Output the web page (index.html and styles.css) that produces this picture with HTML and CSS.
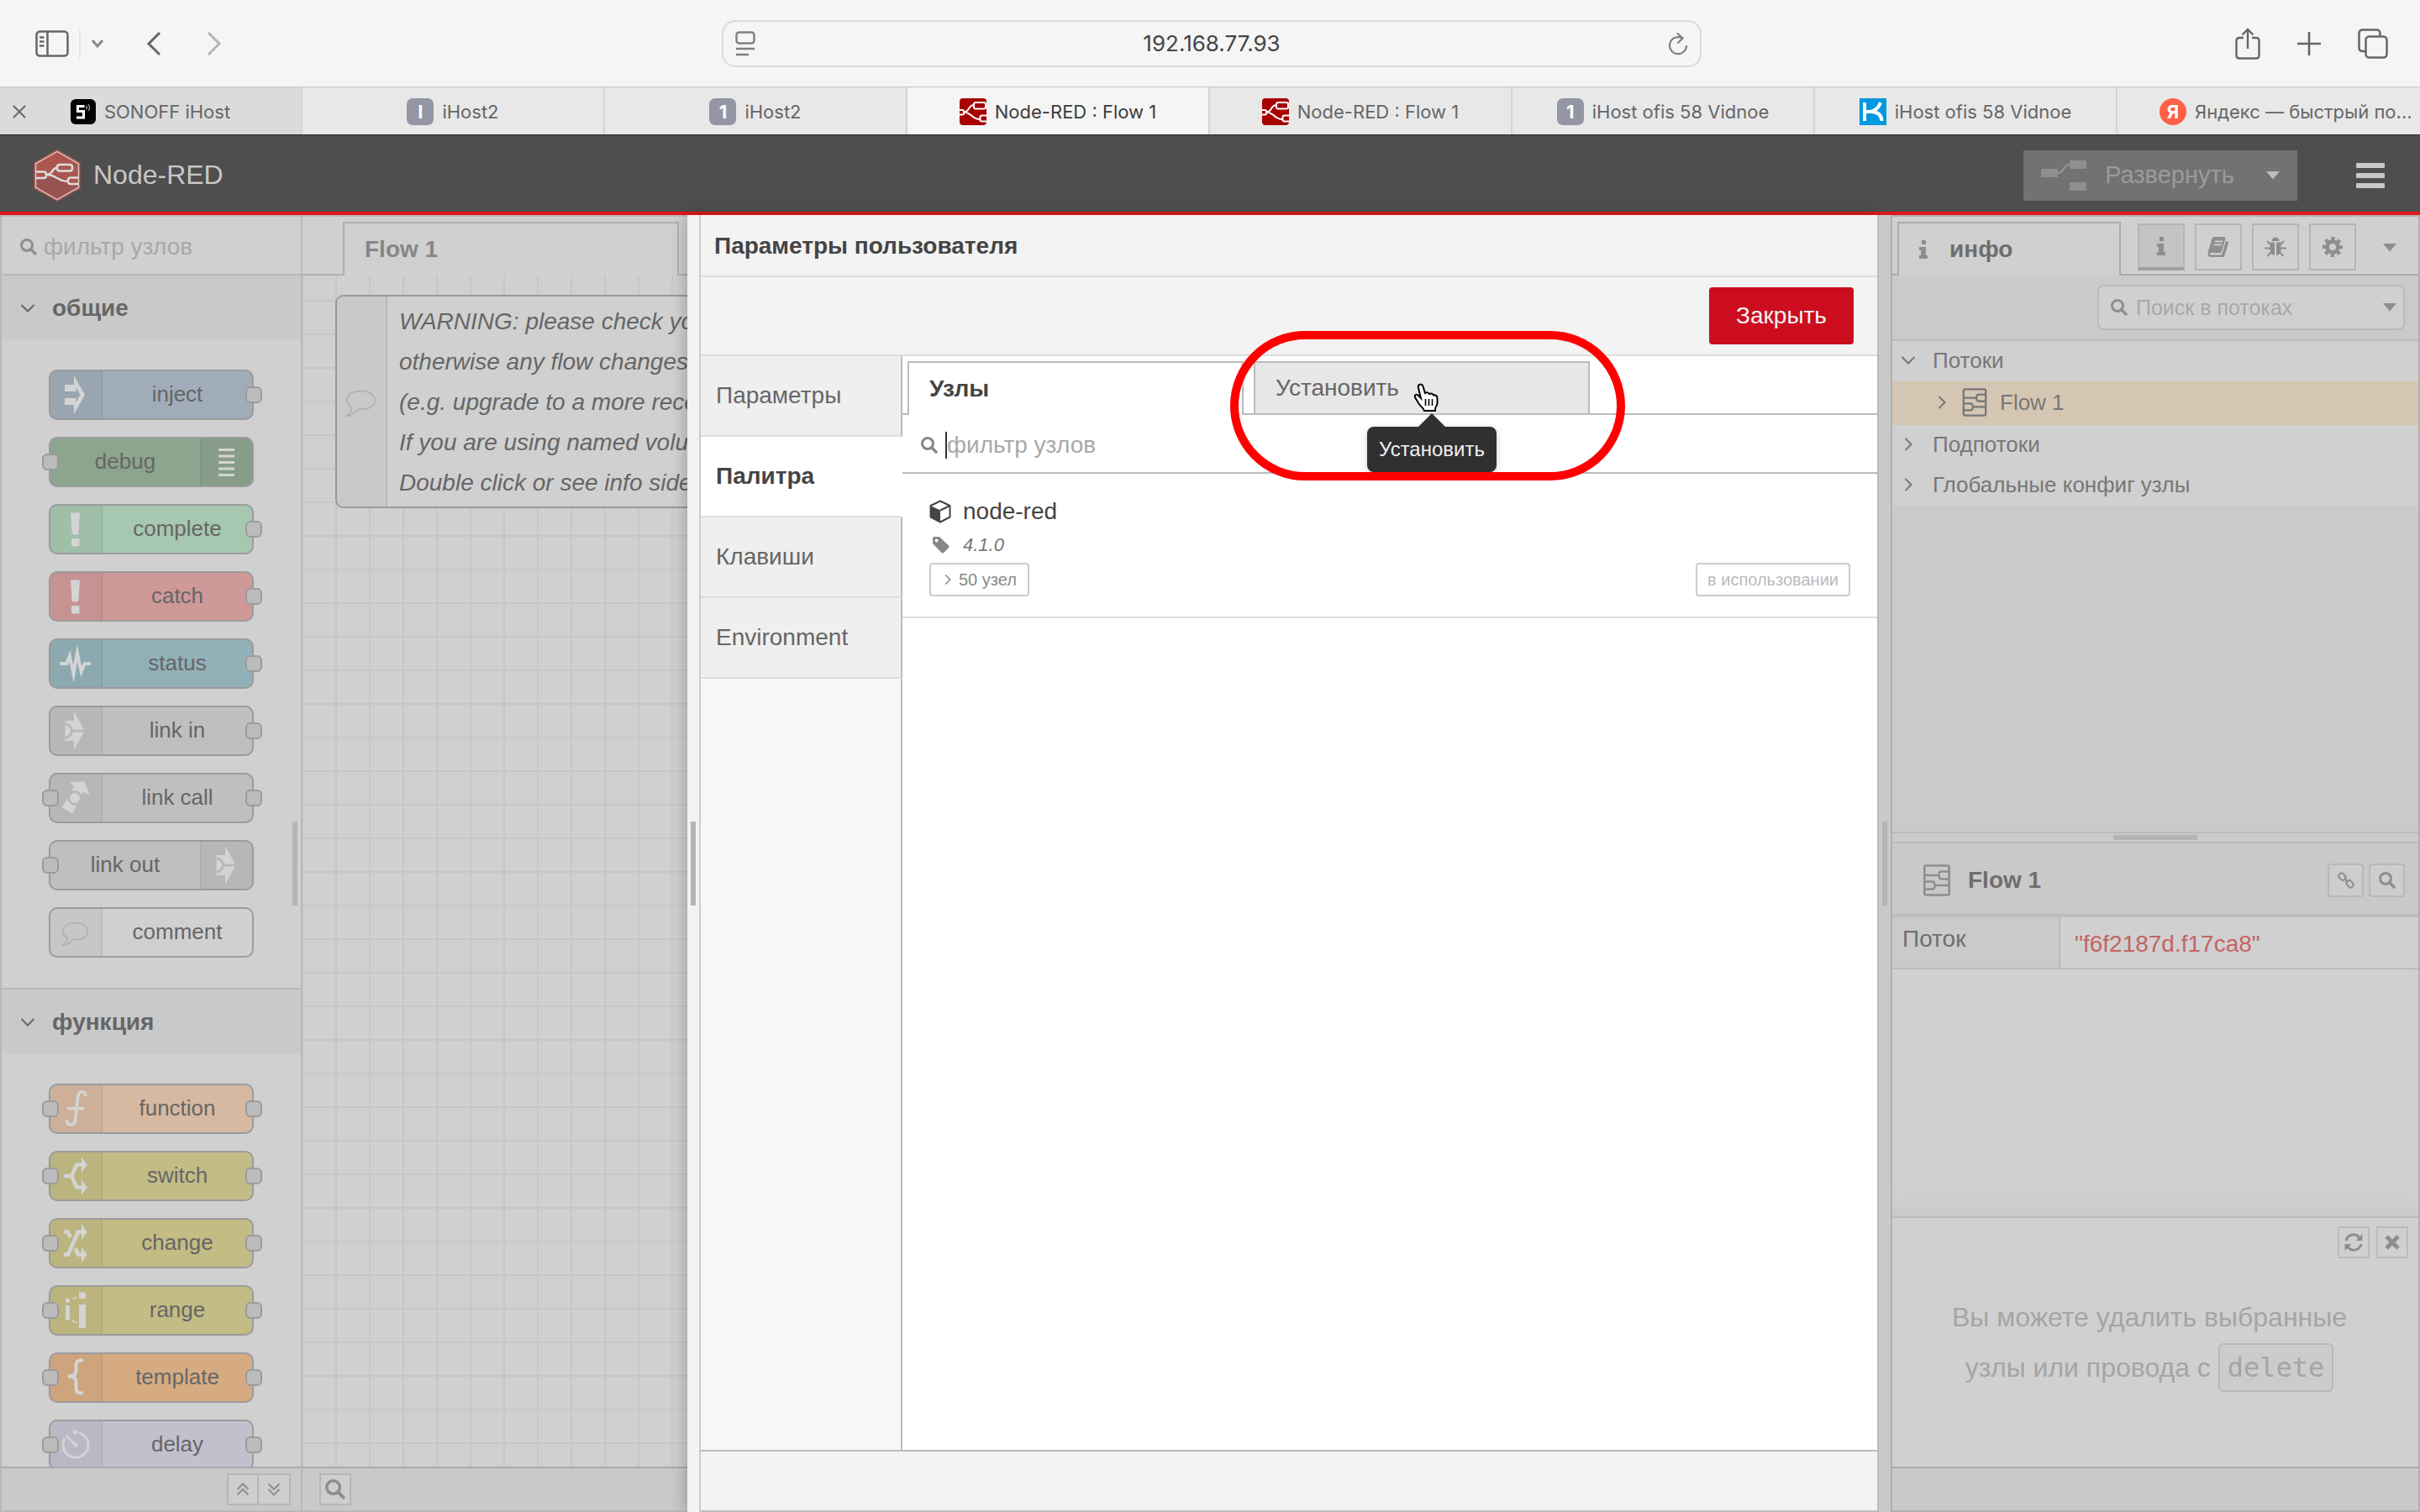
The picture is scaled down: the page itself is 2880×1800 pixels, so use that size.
FILE: index.html
```html
<!DOCTYPE html>
<html lang="ru">

<head>
    <meta charset="UTF-8">
    <meta name="viewport" content="width=device-width, initial-scale=1.0">
    <title>Node-RED : Flow 1</title>
    <link rel="stylesheet" href="styles.css">
</head>

<body>
    <!-- shared icons -->
    <svg class="sprite" aria-hidden="true">
        <symbol id="i-search" viewBox="0 0 20 20">
            <circle cx="8" cy="8" r="6.5" fill="none" stroke="currentColor" stroke-width="3" />
            <path d="M12.5 12.5L18 18" stroke="currentColor" stroke-width="3.4" stroke-linecap="round" />
        </symbol>
        <symbol id="i-down" viewBox="0 0 18 18">
            <path d="M1.5 5L9 12.500L16.500 5" fill="none" stroke="currentColor" stroke-width="2" />
        </symbol>
        <symbol id="i-right" viewBox="0 0 18 18">
            <path d="M5.500 2L12.500 9L5.500 16" fill="none" stroke="currentColor" stroke-width="2" />
        </symbol>
        <symbol id="i-caret" viewBox="0 0 16 10">
            <path d="M0 0H16L8 9.500Z" fill="currentColor" />
        </symbol>
        <symbol id="i-flow" viewBox="0 0 32 38">
            <g fill="none" stroke="currentColor">
                <rect x="1.300" y="1.500" width="29.400" height="35" rx="2" stroke-width="2.600" />
                <path d="M1 13H18M31 8.500H22Q18.500 8.500 18.500 12V14Q18.500 17.500 22 17.500H31M31 25H14M1 20.500H10Q13.500 20.500 13.500 24V26Q13.500 29.500 10 29.500H1" stroke-width="2.400" />
            </g>
        </symbol>
        <symbol id="i-info" viewBox="0 0 10 22">
            <path d="M3 0H8V5H3ZM0 8H8V18H10V22H0V18H2V12H0Z" fill="currentColor" />
        </symbol>
        <symbol id="i-red" viewBox="0 0 32 32">
            <rect width="32" height="32" rx="4" fill="#a60000" />
            <path d="M0 14H3.500Q5 14 5 15.500V18Q5 19.500 3.500 19.500H0M5 16.500C12 16.500 10 8 17 8M5 16.500C15 17 14 25 24 25M32 20.500H26.500Q24.500 20.500 24.500 22.500V25.500Q24.500 27.500 26.500 27.500H32M31 7Q31 5 29 5H19Q17 5 17 7V10.500Q17 12.500 19 12.500H29Q31 12.500 31 10.500Z" fill="none" stroke="#fff" stroke-width="2" />
        </symbol>
        <symbol id="n-inject" viewBox="0 0 60 56">
            <path d="M17 16H28V5L41 28L28 51V40H17V32H30.500V37L35.500 28L30.500 19V24H17Z" fill="currentColor" />
        </symbol>
        <symbol id="n-debug" viewBox="0 0 60 56">
            <path d="M20 12H39V15H20ZM20 19.500H39V22.500H20ZM20 27H39V30H20ZM20 34.500H39V37.500H20ZM20 42H39V45H20Z" fill="currentColor" />
        </symbol>
        <symbol id="n-alert" viewBox="0 0 60 56">
            <path d="M24 8.500H35L33.500 32Q33.500 34.500 31 34.500H28Q25.500 34.500 25.500 32Z" fill="currentColor" />
            <rect x="25" y="39" width="9.500" height="9.500" rx="1.500" fill="currentColor" />
        </symbol>
        <symbol id="n-status" viewBox="0 0 60 56">
            <path d="M11 26H18L23.700 11.700L27 30L32 4.700L37 31L40 26H48V30H42L36.300 44.300L32 26L27.700 51.300L22.700 26.500L21 30H11Z" fill="currentColor" />
        </symbol>
        <symbol id="n-link" viewBox="0 0 60 56">
            <path d="M17.500 16H28V5L40.500 28L28 51V40H17.500Z" fill="currentColor" />
            <path d="M17.500 20A8 8 0 0 1 17.500 36M25 28H41" fill="none" stroke="#b8b8b8" stroke-width="3" />
        </symbol>
        <symbol id="n-call" viewBox="0 0 60 56">
            <path d="M13.500 39.500L28 14.500L23 9.500L40 8L46.500 24L39 20.500L26.500 46.500Z" fill="currentColor" />
            <circle cx="29" cy="28" r="7.500" fill="currentColor" stroke="#b8b8b8" stroke-width="3" />
        </symbol>
        <symbol id="n-comment" viewBox="0 0 60 56">
            <path d="M20 34.500C10 28 14 17 29.500 16.500C40 16.500 44.500 22 44.500 27C44.500 33 38 37 27 36.500C23 40 19 44 14 43.500C18 41 20.500 37 20 34.500Z" fill="none" stroke="#b0b0b0" stroke-width="1.500" />
        </symbol>
        <symbol id="n-function" viewBox="0 0 60 56">
            <path d="M19 41Q20 47.500 25 47Q29.500 46 30 39L32.500 15Q33 8 37.500 7.500Q41 7.500 42 13M20 27.500H40" fill="none" stroke="currentColor" stroke-width="3.600" />
        </symbol>
        <symbol id="n-switch" viewBox="0 0 60 56">
            <path d="M16 28H25L31.500 14.500H38M25 28L31.500 41.500H38" fill="none" stroke="currentColor" stroke-width="4.600" />
            <path d="M37 5L43.500 14.500L37 24ZM37 32.500L43.500 41.500L37 51Z" fill="currentColor" />
        </symbol>
        <symbol id="n-change" viewBox="0 0 60 56">
            <path d="M16 41.500H21L33 14.500H38M16 14.500H20.500L24 21M29.500 34L33 41.500H38" fill="none" stroke="currentColor" stroke-width="4.600" />
            <path d="M37 5L43.500 14.500L37 24ZM37 32.500L43.500 41.500L37 51Z" fill="currentColor" />
        </symbol>
        <symbol id="n-range" viewBox="0 0 60 56">
            <path d="M18 14H23V18.500H18ZM18 22H23V39H18ZM34 6.500H42V14H34ZM34 21H42V49H34Z" fill="currentColor" />
            <path d="M26 14.500L31.500 12M25 39.500L32 43" stroke="currentColor" stroke-width="1.500" />
        </symbol>
        <symbol id="n-template" viewBox="0 0 60 56">
            <path d="M39 7.500H36Q30.500 7.500 30.500 13V20Q30.500 26.500 21 26.500Q30.500 26.500 30.500 33V41Q30.500 46.500 36 46.500H39" fill="none" stroke="currentColor" stroke-width="4" />
        </symbol>
        <symbol id="n-delay" viewBox="0 0 60 56">
            <path d="M34 13.500A15 15 0 1 1 17 20.500" fill="none" stroke="currentColor" stroke-width="3" />
            <path d="M18.500 17L30 28" stroke="currentColor" stroke-width="2.600" />
            <circle cx="29.500" cy="13" r="2.800" fill="currentColor" />
            <circle cx="30" cy="28" r="2.800" fill="currentColor" />
        </symbol>
    </svg>

    <!-- browser toolbar -->
    <div class="browser-bar">
        <div class="browser-side">
            <button class="tool" aria-label="Sidebar">
                <svg width="40" height="32" viewBox="0 0 40 32" fill="none" stroke="currentColor" stroke-width="2.500">
                    <rect x="1.500" y="1.500" width="37" height="29" rx="4" />
                    <path d="M14.500 2V30M5 8.500H10.500M5 13.500H10.500M5 18.500H10.500" />
                </svg>
            </button>
            <span class="tool-divider"></span>
            <button class="tool tool-small" aria-label="Menu">
                <svg width="16" height="12" viewBox="0 0 16 12" fill="none" stroke="#888" stroke-width="3"><path d="M2 2L8 9L14 2" /></svg>
            </button>
            <button class="tool tool-back" aria-label="Back">
                <svg width="18" height="30" viewBox="0 0 18 30" fill="none" stroke="currentColor" stroke-width="3"><path d="M16 2L3 15L16 28" /></svg>
            </button>
            <button class="tool tool-forward" aria-label="Forward">
                <svg width="18" height="30" viewBox="0 0 18 30" fill="none" stroke="#b4b4b4" stroke-width="3"><path d="M2 2L15 15L2 28" /></svg>
            </button>
        </div>
        <div class="address">
            <svg width="24" height="30" viewBox="0 0 24 30" fill="none" stroke="#808080" stroke-width="2.400">
                <rect x="1.500" y="1.500" width="21" height="13" rx="3" />
                <path d="M1 21H23M1 28H16" />
            </svg>
            <input type="text" class="address-input" aria-label="Address" value="192.168.77.93">
            <svg width="24" height="28" viewBox="0 0 24 28" fill="none" stroke="#808080" stroke-width="2.200">
                <path d="M17 7.500A10 10 0 1 0 22 16M11 1.500L17.500 7.500L11.500 13.500" />
            </svg>
        </div>
        <div class="browser-side browser-side-right">
            <button class="tool" aria-label="Share">
                <svg width="30" height="38" viewBox="0 0 30 38" fill="none" stroke="currentColor" stroke-width="2.400">
                    <path d="M10 12H5Q1.500 12 1.500 15.500V33Q1.500 36.500 5 36.500H25Q28.500 36.500 28.500 33V15.500Q28.500 12 25 12H20M15 25V2M8.500 8.500L15 2L21.500 8.500" />
                </svg>
            </button>
            <button class="tool" aria-label="New tab">
                <svg width="28" height="28" viewBox="0 0 28 28" stroke="currentColor" stroke-width="2.600"><path d="M14 0V28M0 14H28" /></svg>
            </button>
            <button class="tool" aria-label="Tabs">
                <svg width="36" height="36" viewBox="0 0 36 36" fill="none" stroke="currentColor" stroke-width="2.500">
                    <rect x="9.500" y="9.500" width="25" height="25" rx="4" />
                    <path d="M9 27H6Q1.500 27 1.500 23V6Q1.500 1.500 6 1.500H22Q26.500 1.500 26.500 6V9" />
                </svg>
            </button>
        </div>
    </div>

    <nav class="browser-tabs">
        <a href="#" class="browser-tab browser-tab-hover">
            <svg class="tab-close" width="16" height="16" viewBox="0 0 16 16" stroke="#666" stroke-width="2"><path d="M1 1L15 15M15 1L1 15" /></svg>
            <svg width="30" height="30" viewBox="0 0 30 30" fill="none">
                <rect width="30" height="30" rx="6" fill="#000" />
                <path d="M16.500 8.500H8.500V14.500H15.500V22H7" stroke="#fff" stroke-width="3" />
                <path d="M18.500 8Q20.500 10 18.500 12.500M21 6Q24 10 21 14" stroke="#aaa" stroke-width="1.200" />
            </svg>
            <span>SONOFF iHost</span>
        </a>
        <a href="#" class="browser-tab"><span class="letter">I</span><span>iHost2</span></a>
        <a href="#" class="browser-tab"><span class="letter">1</span><span>iHost2</span></a>
        <a href="#" class="browser-tab browser-tab-active"><svg width="32" height="32"><use href="#i-red" /></svg><span>Node-RED : Flow 1</span></a>
        <a href="#" class="browser-tab"><svg width="32" height="32"><use href="#i-red" /></svg><span>Node-RED : Flow 1</span></a>
        <a href="#" class="browser-tab"><span class="letter">1</span><span>iHost ofis 58 Vidnoe</span></a>
        <a href="#" class="browser-tab">
            <svg width="32" height="32" viewBox="0 0 32 32" fill="none">
                <rect width="32" height="32" fill="#0099e0" />
                <path d="M6 5V27M25 5Q22 14 13 16M6 16H15Q26 17 26.500 27" stroke="#fff" stroke-width="4" />
            </svg>
            <span>iHost ofis 58 Vidnoe</span>
        </a>
        <a href="#" class="browser-tab browser-tab-last"><span class="letter letter-round">Я</span><span>Яндекс — быстрый по...</span></a>
    </nav>

    <header class="header">
        <svg width="56" height="62" viewBox="0 0 56 62" fill="none">
            <path d="M28 0L55.500 15.500V46.500L28 62L.5 46.500V15.500Z" fill="#ab574f" />
            <path d="M28 31L53 42V46L28 60L3 46V36Z" fill="#985350" />
            <path d="M28 2.500L53.500 17V45L28 59.500L2.500 45V17Z" stroke="#dcc5c3" stroke-width="1.400" />
            <path d="M3 26.500H12Q15 26.500 15 29.500V31Q15 34 12 34H3M15 30C24 30 21 22 28 21.500M15 30C26 29 28 38 41 38M53 33.500H44Q41 33.500 41 36.500V38Q41 41 44 41H53M46 21Q46 18 43 18H31Q28 18 28 21V22.500Q28 25.500 31 25.500H43Q46 25.500 46 22.500Z" stroke="#ddd" stroke-width="2.400" />
        </svg>
        <span class="brand">Node-RED</span>
        <button class="deploy" disabled>
            <svg width="54" height="36" viewBox="0 0 54 36" fill="#8f8f8f">
                <rect y="10" width="20" height="10" /><rect x="34" width="20" height="10" /><rect x="34" y="26" width="20" height="10" />
                <path d="M20 15C28 15 26 5 34 5" fill="none" stroke="#8f8f8f" stroke-width="2.500" />
            </svg>
            <span>Развернуть</span>
            <svg class="deploy-caret" width="16" height="10"><use href="#i-caret" /></svg>
        </button>
        <button class="menu" aria-label="Menu"><span></span><span></span><span></span></button>
    </header>

    <main class="editor">
        <aside class="palette">
            <label class="palette-search">
                <svg width="20" height="20"><use href="#i-search" /></svg>
                <input type="text" class="input" placeholder="фильтр узлов" aria-label="фильтр узлов">
            </label>
            <div class="palette-list">
                <h3 class="category"><svg width="18" height="18"><use href="#i-down" /></svg>общие</h3>
                <div class="nodes">
                    <div class="node inject"><svg class="node-icon"><use href="#n-inject" /></svg><span class="node-label">inject</span><i class="port port-out"></i></div>
                    <div class="node node-right debug"><svg class="node-icon"><use href="#n-debug" /></svg><span class="node-label">debug</span><i class="port port-in"></i></div>
                    <div class="node complete"><svg class="node-icon"><use href="#n-alert" /></svg><span class="node-label">complete</span><i class="port port-out"></i></div>
                    <div class="node catch"><svg class="node-icon"><use href="#n-alert" /></svg><span class="node-label">catch</span><i class="port port-out"></i></div>
                    <div class="node status"><svg class="node-icon"><use href="#n-status" /></svg><span class="node-label">status</span><i class="port port-out"></i></div>
                    <div class="node link"><svg class="node-icon"><use href="#n-link" /></svg><span class="node-label">link in</span><i class="port port-out"></i></div>
                    <div class="node link"><svg class="node-icon"><use href="#n-call" /></svg><span class="node-label">link call</span><i class="port port-in"></i><i class="port port-out"></i></div>
                    <div class="node node-right link"><svg class="node-icon"><use href="#n-link" /></svg><span class="node-label">link out</span><i class="port port-in"></i></div>
                    <div class="node comment"><svg class="node-icon"><use href="#n-comment" /></svg><span class="node-label">comment</span></div>
                </div>
                <h3 class="category"><svg width="18" height="18"><use href="#i-down" /></svg>функция</h3>
                <div class="nodes">
                    <div class="node function"><svg class="node-icon"><use href="#n-function" /></svg><span class="node-label">function</span><i class="port port-in"></i><i class="port port-out"></i></div>
                    <div class="node switch"><svg class="node-icon"><use href="#n-switch" /></svg><span class="node-label">switch</span><i class="port port-in"></i><i class="port port-out"></i></div>
                    <div class="node switch"><svg class="node-icon"><use href="#n-change" /></svg><span class="node-label">change</span><i class="port port-in"></i><i class="port port-out"></i></div>
                    <div class="node switch"><svg class="node-icon"><use href="#n-range" /></svg><span class="node-label">range</span><i class="port port-in"></i><i class="port port-out"></i></div>
                    <div class="node template"><svg class="node-icon"><use href="#n-template" /></svg><span class="node-label">template</span><i class="port port-in"></i><i class="port port-out"></i></div>
                    <div class="node delay"><svg class="node-icon"><use href="#n-delay" /></svg><span class="node-label">delay</span><i class="port port-in"></i><i class="port port-out"></i></div>
                </div>
            </div>
            <span class="grip palette-grip"></span>
            <div class="footer palette-footer">
                <button class="footer-button" aria-label="Collapse all">
                    <svg width="16" height="16" viewBox="0 0 16 16" fill="none" stroke="currentColor" stroke-width="2"><path d="M1.500 8L8 1.500L14.500 8M1.500 14.500L8 8L14.500 14.500" /></svg>
                </button>
                <button class="footer-button" aria-label="Expand all">
                    <svg width="16" height="16" viewBox="0 0 16 16" fill="none" stroke="currentColor" stroke-width="2"><path d="M1.500 1.500L8 8L14.500 1.500M1.500 8L8 14.500L14.500 8" /></svg>
                </button>
            </div>
        </aside>

        <section class="workspace">
            <div class="tabs"><a href="#" class="tab flow-tab">Flow 1</a></div>
            <div class="canvas">
                <div class="note">
                    <div class="note-icon"><svg width="66" height="62"><use href="#n-comment" /></svg></div>
                    <div class="note-text">WARNING: please check you<br>otherwise any flow changes<br>(e.g. upgrade to a more recent<br>If you are using named volume<br>Double click or see info side</div>
                </div>
            </div>
            <div class="footer workspace-footer">
                <button class="footer-button" aria-label="Search"><svg width="24" height="24"><use href="#i-search" /></svg></button>
            </div>
        </section>

        <section class="tray">
            <div class="tray-handle"><span class="grip"></span></div>
            <div class="tray-content">
                <h2 class="tray-title">Параметры пользователя</h2>
                <div class="tray-toolbar"><button class="close-button">Закрыть</button></div>
                <div class="tray-body">
                    <nav class="side-tabs">
                        <a href="#" class="side-tab">Параметры</a>
                        <a href="#" class="side-tab side-tab-active">Палитра</a>
                        <a href="#" class="side-tab">Клавиши</a>
                        <a href="#" class="side-tab">Environment</a>
                        <span class="side-rest"></span>
                    </nav>
                    <div class="manager">
                        <div class="tabs manager-tabs">
                            <a href="#" class="tab manager-tab">Узлы</a>
                            <div class="tab-wrap">
                                <a href="#" class="tab manager-tab manager-tab-hover">Установить</a>
                                <span class="tooltip">Установить</span>
                                <span class="ring"></span>
                                <svg class="pointer" viewBox="0 0 32 36">
                                    <path d="M7 3C9 2 11 3 11.500 5L14 13C16 12 18 12 19 14C21 13 23 13.500 24 15.500C26 15 28.500 16 28.500 19V25C28.500 28 26 29 26 32V34H13C12 30 7 28 5 23L2 18C1 15 4 13.500 6 16L9 19L6 7C5.500 5 6 3.500 7 3Z" fill="#fff" stroke="#000" stroke-width="2" />
                                    <path d="M14.500 20V28M18.500 20V28M22.500 20V28" stroke="#000" stroke-width="1.600" />
                                </svg>
                            </div>
                        </div>
                        <label class="manager-search">
                            <svg width="20" height="20"><use href="#i-search" /></svg>
                            <span class="text-cursor"></span>
                            <input type="text" class="input" placeholder="фильтр узлов" aria-label="фильтр узлов">
                        </label>
                        <div class="module">
                            <div class="module-name">
                                <svg width="26" height="28" viewBox="0 0 26 28">
                                    <path d="M13 1.500L24.500 7V20.500L13 26.500L1.500 20.500V7Z" fill="#fff" stroke="#444" stroke-width="2" stroke-linejoin="round" />
                                    <path d="M1.500 7L13 12.500V26.500L1.500 20.500Z" fill="#444" />
                                    <path d="M13 12.500L24.500 7" stroke="#444" stroke-width="2" />
                                </svg>
                                <span>node-red</span>
                            </div>
                            <div class="module-version">
                                <svg width="20" height="20" viewBox="0 0 20 20"><path d="M0 2Q0 0 2 0H8L19 10.500Q20 12 19 13L13 19Q12 20 10.500 19L0 8ZM4.500 2.500A2 2 0 1 0 4.600 6.500A2 2 0 1 0 4.500 2.500Z" fill="#888" fill-rule="evenodd" /></svg>
                                <em>4.1.0</em>
                            </div>
                            <div class="module-actions">
                                <button class="small-button"><svg width="14" height="14"><use href="#i-right" /></svg>50 узел</button>
                                <button class="small-button" disabled>в использовании</button>
                            </div>
                        </div>
                    </div>
                </div>
                <div class="tray-footer"></div>
            </div>
        </section>

        <div class="separator"><span class="grip"></span></div>

        <aside class="sidebar">
            <div class="tabs sidebar-tabs">
                <a href="#" class="tab info-tab"><svg width="10" height="22"><use href="#i-info" /></svg>инфо</a>
                <div class="tab-buttons">
                    <button class="tab-button tab-button-active" aria-label="Info"><svg width="10" height="22"><use href="#i-info" /></svg></button>
                    <button class="tab-button" aria-label="Help">
                        <svg width="26" height="24" viewBox="0 0 26 24"><path d="M8 0H20Q22 0 21.500 2L17 17Q16.500 19 14.500 19H4Q2.500 19 2.500 20.500Q3 21.500 4 21.500H17L22 5Q25.500 5 25 7L20.500 22Q20 24 18 24H4Q0 23.500 .5 19L5.500 2Q6 0 8 0ZM9 4.500L8.600 6.300H18L18.400 4.500ZM8 8.500L7.600 10.300H17L17.400 8.500Z" fill="currentColor" fill-rule="evenodd" /></svg>
                    </button>
                    <button class="tab-button" aria-label="Debug">
                        <svg width="26" height="24" viewBox="0 0 26 24" stroke="currentColor" fill="none" stroke-width="2">
                            <path d="M8.500 5Q9 .5 13 .5Q17 .5 17.500 5Z" fill="currentColor" stroke="none" />
                            <path d="M6.500 6.500H12V22Q6.500 21 6.500 15ZM14 6.500H19.500V15Q19.500 21 14 22Z" fill="currentColor" stroke="none" />
                            <path d="M7 9L3 5M19 9L23 5M7 13.500H0M19 13.500H26M8 18L3.500 23M18 18L22.500 23" />
                        </svg>
                    </button>
                    <button class="tab-button" aria-label="Config">
                        <svg width="24" height="24" viewBox="0 0 24 24" fill="none" stroke="currentColor">
                            <circle cx="12" cy="12" r="6.500" stroke-width="5" />
                            <circle cx="12" cy="12" r="10" stroke-width="4" stroke-dasharray="4.200 3.654" stroke-dashoffset="2.100" />
                        </svg>
                    </button>
                </div>
                <button class="plain-button" aria-label="More"><svg width="16" height="10"><use href="#i-caret" /></svg></button>
            </div>
            <div class="outline">
                <div class="flow-search-bar">
                    <label class="flow-search">
                        <svg width="20" height="20"><use href="#i-search" /></svg>
                        <input type="text" class="input" placeholder="Поиск в потоках" aria-label="Поиск в потоках">
                        <svg width="16" height="10"><use href="#i-caret" /></svg>
                    </label>
                </div>
                <ul class="tree">
                    <li class="tree-row"><svg width="18" height="18"><use href="#i-down" /></svg>Потоки</li>
                    <li class="tree-row tree-selected"><svg width="18" height="18"><use href="#i-right" /></svg><svg width="30" height="34"><use href="#i-flow" /></svg>Flow 1</li>
                    <li class="tree-row"><svg width="18" height="18"><use href="#i-right" /></svg>Подпотоки</li>
                    <li class="tree-row"><svg width="18" height="18"><use href="#i-right" /></svg>Глобальные конфиг узлы</li>
                </ul>
            </div>
            <div class="splitter"><span></span></div>
            <div class="details">
                <div class="details-title">
                    <svg width="34" height="38"><use href="#i-flow" /></svg>
                    <h3>Flow 1</h3>
                    <button class="details-button" aria-label="Link">
                        <svg width="20" height="20" viewBox="0 0 20 20" fill="none" stroke="currentColor" stroke-width="2">
                            <rect x="1" y="2.500" width="9" height="6.500" rx="3" transform="rotate(45 5.500 5.700)" />
                            <rect x="10" y="11" width="9" height="6.500" rx="3" transform="rotate(45 14.500 14.200)" />
                            <path d="M7.500 7.500L12.500 12.500" />
                        </svg>
                    </button>
                    <button class="details-button" aria-label="Find"><svg width="20" height="20"><use href="#i-search" /></svg></button>
                </div>
                <table class="props">
                    <tr>
                        <th>Поток</th>
                        <td>"f6f2187d.f17ca8"</td>
                    </tr>
                </table>
            </div>
            <div class="tips">
                <div class="tips-buttons">
                    <button class="tips-button" aria-label="Refresh">
                        <svg width="22" height="22" viewBox="0 0 22 22" fill="none" stroke="currentColor" stroke-width="3">
                            <path d="M2 9A9 9 0 0 1 18 5.500M20 13A9 9 0 0 1 4 16.500" />
                            <path d="M21.500 1V9H13.500ZM.5 21V13H8.500Z" fill="currentColor" stroke="none" />
                        </svg>
                    </button>
                    <button class="tips-button" aria-label="Close">
                        <svg width="18" height="18" viewBox="0 0 18 18" stroke="currentColor" stroke-width="5"><path d="M2 2L16 16M16 2L2 16" /></svg>
                    </button>
                </div>
                <p class="tip">Вы можете удалить выбранные<br>узлы или провода с <kbd>delete</kbd></p>
            </div>
            <div class="footer"></div>
        </aside>
    </main>
</body>

</html>
```

FILE: styles.css
```css
* {
    box-sizing: border-box;
}

body {
    margin: 0;
    height: 100vh;
    display: flex;
    flex-direction: column;
    overflow: hidden;
    font-family: "Liberation Sans", Arial, sans-serif;
    font-size: 28px;
    color: #666;
    background-color: #d0d0d0;
}

h2,
h3,
ul,
p {
    margin: 0;
    padding: 0;
}

a {
    color: inherit;
    text-decoration: none;
}

button {
    font: inherit;
    color: inherit;
    background: none;
    border: none;
    padding: 0;
    display: flex;
    align-items: center;
    justify-content: center;
}

svg {
    flex: none;
}

.sprite {
    display: none;
}

.input {
    flex: 1;
    min-width: 0;
    font: inherit;
    color: #666;
    border: none;
    padding: 0;
    background: none;
    outline: none;
}

.input::placeholder {
    color: #a8a8a8;
    opacity: 1;
}

/* browser window */
.browser-bar {
    flex: none;
    height: 104px;
    display: flex;
    align-items: center;
    background-color: #f5f5f5;
    border-bottom: 1px solid #c4c4c4;
}

.browser-side {
    flex: 1;
    display: flex;
    align-items: center;
    padding-left: 42px;
    color: #666;
}

.browser-side-right {
    justify-content: flex-end;
    gap: 44px;
    padding: 0 38px 0 0;
}

.tool-divider {
    width: 2px;
    height: 36px;
    margin: 0 12px;
    background-color: #e6e6e6;
}

.tool-back {
    margin-left: 50px;
}

.tool-forward {
    margin-left: 54px;
}

.address {
    flex: 0 1 1166px;
    height: 56px;
    padding: 0 14px 0 14px;
    display: flex;
    align-items: center;
    border: 2px solid #dadada;
    border-radius: 16px;
}

.address-input {
    flex: 1;
    min-width: 0;
    border: none;
    background: none;
    text-align: center;
    font-family: Inter, sans-serif;
    font-size: 26px;
    color: #444;
}

.browser-tabs {
    flex: none;
    height: 56px;
    display: flex;
    font-family: Inter, sans-serif;
    font-size: 22px;
    background-color: #e8e8e8;
}

.browser-tab {
    width: 12.5%;
    position: relative;
    padding-top: 2px;
    display: flex;
    align-items: center;
    justify-content: center;
    gap: 10px;
    white-space: nowrap;
    overflow: hidden;
    border-right: 2px solid #d4d4d4;
}

.browser-tab-hover {
    background-color: #dbdbdb;
}

.browser-tab-active {
    background-color: #f5f5f5;
    color: #3c3c3c;
}

.browser-tab-last {
    border-right: none;
    padding-left: 50px;
    justify-content: flex-start;
}

.tab-close {
    position: absolute;
    left: 15px;
    top: 21px;
}

.letter {
    width: 32px;
    height: 32px;
    border-radius: 7px;
    background-color: #9496a4;
    color: #fff;
    font-weight: bold;
    text-align: center;
    line-height: 32px;
}

.letter-round {
    border-radius: 50%;
    background-color: #ff6047;
}

/* editor header */
.header {
    flex: none;
    height: 96px;
    padding: 4px 0 0 40px;
    display: flex;
    align-items: center;
    background-color: #4e4e4e;
    border-top: 1px solid #262626;
    border-bottom: 4px solid #e11919;
    font-size: 32px;
}

.brand {
    flex: 1;
    margin-left: 15px;
    color: #c7c7c7;
}

.deploy {
    height: 60px;
    width: 326px;
    gap: 22px;
    background-color: #727272;
    color: #9b9b9b;
    font-size: 29px;
}

.deploy-caret {
    color: #bbb;
    margin-left: 16px;
}

.menu {
    width: 34px;
    margin: 0 42px 0 70px;
    flex-direction: column;
    gap: 6px;
}

.menu span {
    width: 100%;
    height: 6px;
    border-radius: 1px;
    background-color: #c8c8c8;
}

.editor {
    flex: 1;
    min-height: 0;
    display: flex;
}

.footer {
    flex: none;
    height: 52px;
    display: flex;
    align-items: center;
    background-color: #c9c9c9;
    border-top: 2px solid #aaa;
}

.footer-button {
    width: 38px;
    height: 38px;
    border: 2px solid #b6b6b6;
    background-color: #cecece;
    color: #8e8e8e;
}

.grip {
    width: 6px;
    height: 100px;
    background-color: #b5b5b5;
}

/* tab strips */
.tabs {
    flex: none;
    height: 70px;
    padding-top: 6px;
    display: flex;
    border-bottom: 2px solid #aaa;
}

.tab {
    height: 64px;
    padding: 0 24px;
    display: flex;
    align-items: center;
    border: 2px solid #aaa;
    border-bottom: none;
    background-color: #d0d0d0;
    font-weight: bold;
}

/* palette */
.palette {
    flex: none;
    width: 360px;
    position: relative;
    display: flex;
    flex-direction: column;
    border: 2px solid #b8b8b8;
    background-color: #d0d0d0;
}

.palette-search {
    flex: none;
    height: 68px;
    padding: 4px 0 0 22px;
    display: flex;
    align-items: center;
    gap: 8px;
    color: #8e8e8e;
}

.palette-list {
    flex: 1;
    min-height: 0;
    overflow: hidden;
}

.category {
    height: 78px;
    padding: 2px 0 0 22px;
    display: flex;
    align-items: center;
    gap: 20px;
    font-size: 28px;
    border-top: 2px solid #b8b8b8;
    background-color: #c9c9c9;
}

.nodes {
    padding: 36px 56px;
    display: flex;
    flex-direction: column;
    gap: 20px;
}

.node {
    flex: none;
    height: 60px;
    position: relative;
    display: flex;
    border: 2px solid #9b9b9b;
    border-radius: 10px;
    font-size: 26px;
}

.node-right {
    flex-direction: row-reverse;
}

.node-icon {
    width: 62px;
    height: 56px;
    color: #d4d4d4;
    background-color: rgba(0, 0, 0, 0.04);
    border-right: 2px solid rgba(0, 0, 0, 0.05);
    border-radius: 8px 0 0 8px;
}

.node-right .node-icon {
    border-right: none;
    border-left: 2px solid rgba(0, 0, 0, 0.05);
    border-radius: 0 8px 8px 0;
}

.node-label {
    flex: 1;
    text-align: center;
    line-height: 54px;
}

.port {
    position: absolute;
    top: 18px;
    width: 20px;
    height: 20px;
    border: 2px solid #9b9b9b;
    border-radius: 6px;
    background-color: #bcbcbc;
}

.port-in {
    left: -10px;
}

.port-out {
    right: -12px;
}

.inject { background-color: #a0adb9; }
.debug { background-color: #8da48f; }
.complete { background-color: #a6c7b0; }
.catch { background-color: #cf9998; }
.status { background-color: #92b0b8; }
.link { background-color: #bfbfbf; }
.comment { background-color: #d0d0d0; }
.function { background-color: #d7b8a1; }
.switch { background-color: #c3bc85; }
.template { background-color: #d6ab82; }
.delay { background-color: #c3c0ce; }

.palette-grip {
    position: absolute;
    right: 4px;
    top: 50%;
    margin-top: -50px;
}

.palette-footer {
    justify-content: flex-end;
    padding-right: 12px;
}

.palette-footer .footer-button + .footer-button {
    margin-left: -2px;
    width: 40px;
}

/* workspace */
.workspace {
    flex: 1;
    min-width: 0;
    display: flex;
    flex-direction: column;
    overflow: hidden;
    border: solid #b8b8b8;
    border-width: 2px 0;
}

.workspace .tabs {
    padding-left: 48px;
    border-color: #b0b0b0;
}

.flow-tab {
    width: 400px;
    border-color: #b0b0b0;
    color: #868686;
}

/* grid lines every 40px */
.canvas {
    flex: 1;
    position: relative;
    overflow: hidden;
    background-image: linear-gradient(#c6c6c6 2px, transparent 2px), linear-gradient(90deg, #c6c6c6 2px, transparent 2px);
    background-size: 40px 40px;
    background-position: 39px 29px;
}

.note {
    position: absolute;
    left: 39px;
    top: 23px;
    width: 900px;
    height: 254px;
    display: flex;
    border: 2px solid #999;
    border-radius: 10px;
    background-color: #d0d0d0;
}

.note-icon {
    width: 60px;
    display: flex;
    align-items: center;
    justify-content: center;
    border-right: 2px solid #b9b9b9;
    border-radius: 8px 0 0 8px;
    background-color: #c9c9c9;
}

.note-text {
    padding: 6px 14px;
    font-style: italic;
    line-height: 48px;
    white-space: nowrap;
}

.workspace-footer {
    padding-left: 20px;
}

/* tray */
.tray {
    flex: none;
    width: 1416px;
    position: relative;
    display: flex;
    box-shadow: -2px 0 16px rgba(0, 0, 0, 0.25);
}

.tray-handle {
    width: 16px;
    display: flex;
    align-items: center;
    justify-content: center;
    background-color: #f3f3f3;
    border-right: 2px solid #ccc;
}

.tray-content {
    flex: 1;
    min-width: 0;
    display: flex;
    flex-direction: column;
    background-color: #f3f3f3;
    border-bottom: 2px solid #bbb;
}

.tray-title {
    height: 74px;
    padding-left: 16px;
    font-size: 28px;
    line-height: 74px;
    color: #444;
    border-bottom: 2px solid #ddd;
}

.tray-toolbar {
    height: 94px;
    padding: 0 28px;
    display: flex;
    align-items: center;
    justify-content: flex-end;
    border-bottom: 2px solid #ddd;
}

.close-button {
    width: 172px;
    height: 68px;
    border-radius: 4px;
    background-color: #cc0d1f;
    color: #f3f3f3;
}

.tray-body {
    flex: 1;
    min-height: 0;
    display: flex;
    background-color: #fff;
    border-bottom: 2px solid #bbb;
}

.side-tabs {
    width: 240px;
    display: flex;
    flex-direction: column;
    background-color: #f7f7f7;
}

.side-tab {
    height: 96px;
    padding-left: 18px;
    line-height: 94px;
    background-color: #efefef;
    border-right: 2px solid #bbb;
    border-bottom: 2px solid #ddd;
}

.side-tab-active {
    background-color: #fff;
    border-right-color: #fff;
    color: #444;
    font-weight: bold;
}

.side-rest {
    flex: 1;
    border-right: 2px solid #bbb;
}

.manager {
    flex: 1;
    min-width: 0;
}

.manager-tabs {
    padding-left: 6px;
    gap: 12px;
    border-color: #bbb;
}

.manager-tab {
    width: 400px;
    border-color: #bbb;
    background-color: #fff;
    color: #444;
}

.tab-wrap {
    position: relative;
}

.manager-tab-hover {
    height: 62px;
    background-color: #e7e7e7;
    color: #666;
    font-weight: normal;
}

.tooltip {
    position: absolute;
    z-index: 2;
    left: 135px;
    top: 78px;
    padding: 0 14px;
    line-height: 54px;
    border-radius: 8px;
    background-color: #303030;
    color: #f0f0f0;
    font-size: 24px;
    box-shadow: 0 2px 8px rgba(0, 0, 0, 0.2);
}

.tooltip::before {
    content: "";
    position: absolute;
    left: 50%;
    top: -16px;
    margin-left: -16px;
    border: 16px solid transparent;
    border-top: none;
    border-bottom-color: #303030;
}

.ring {
    position: absolute;
    z-index: 3;
    left: -28px;
    top: -36px;
    width: 470px;
    height: 178px;
    border: 10px solid #f00;
    border-radius: 89px;
}

.pointer {
    position: absolute;
    z-index: 4;
    left: 190px;
    top: 25px;
    width: 32px;
    height: 36px;
}

.manager-search {
    height: 70px;
    padding: 4px 0 0 22px;
    display: flex;
    align-items: center;
    color: #888;
    border-bottom: 2px solid #bbb;
}

.text-cursor {
    width: 2px;
    height: 32px;
    margin-left: 9px;
    background-color: #333;
}

.module {
    height: 172px;
    padding: 26px 32px 24px;
    border-bottom: 2px solid #ddd;
}

.module-name,
.module-version {
    display: flex;
    align-items: center;
    gap: 14px;
    color: #444;
}

.module-name {
    height: 38px;
}

.module-version {
    height: 42px;
    padding-left: 4px;
    gap: 16px;
    font-size: 22px;
    color: #777;
}

.module-actions {
    display: flex;
    justify-content: space-between;
}

.small-button {
    height: 40px;
    padding: 0 13px;
    gap: 6px;
    border: 2px solid #ccc;
    border-radius: 4px;
    background-color: #fff;
    font-size: 20px;
    color: #888;
}

.small-button:disabled {
    padding: 0 12px;
    color: #bbb;
}

.tray-footer {
    height: 70px;
}

/* separator between tray and sidebar */
.separator {
    flex: none;
    width: 16px;
    position: relative;
    display: flex;
    align-items: center;
    justify-content: center;
    background-color: #c9c9c9;
    border-left: 2px solid #bbb;
}

/* sidebar */
.sidebar {
    flex: none;
    width: 630px;
    position: relative;
    display: flex;
    flex-direction: column;
    border: 2px solid #b0b0b0;
    background-color: #cacaca;
}

.sidebar-tabs {
    padding-left: 6px;
    background-color: #d0d0d0;
}

.info-tab {
    flex: 1;
    gap: 26px;
    color: #6e6e6e;
}

.info-tab svg {
    color: #8e8e8e;
}

.tab-buttons {
    display: flex;
    gap: 12px;
    margin: 2px 0 0 20px;
}

.tab-button {
    width: 56px;
    height: 56px;
    border: 2px solid #b5b5b5;
    color: #8e8e8e;
}

.tab-button-active {
    background-color: #c4c4c4;
    border-bottom: 4px solid #a0a0a0;
}

.plain-button {
    width: 74px;
    height: 62px;
    padding-left: 6px;
    color: #8e8e8e;
}

.outline {
    flex: 1;
    min-height: 0;
}

.flow-search-bar {
    height: 78px;
    padding-right: 16px;
    display: flex;
    align-items: center;
    justify-content: flex-end;
    border-bottom: 2px solid #bbb;
}

.flow-search {
    width: 366px;
    height: 54px;
    padding: 0 8px 0 14px;
    display: flex;
    align-items: center;
    gap: 10px;
    border: 2px solid #bbb;
    border-radius: 8px;
    background-color: #d0d0d0;
    color: #8e8e8e;
    font-size: 25px;
}

.tree {
    list-style: none;
    background-color: #d0d0d0;
    font-size: 26px;
    color: #777;
}

.tree-row {
    height: 48px;
    padding: 0 0 2px 10px;
    display: flex;
    align-items: center;
    gap: 20px;
}

.tree-selected {
    height: 52px;
    padding-left: 50px;
    gap: 15px;
    background-color: #d5c6b3;
}

.splitter {
    flex: none;
    height: 14px;
    display: flex;
    align-items: center;
    justify-content: center;
    border: solid #bbb;
    border-width: 2px 0;
}

.splitter span {
    width: 100px;
    height: 6px;
    background-color: #b5b5b5;
}

.details {
    flex: none;
    height: 444px;
    background-color: #d0d0d0;
    box-shadow: inset 0 -30px 30px -24px #c6c6c6;
}

.details-title {
    height: 88px;
    padding: 4px 16px 0 36px;
    display: flex;
    align-items: center;
    gap: 6px;
    background-color: #c9c9c9;
    border-bottom: 4px solid #bdbdbd;
    color: #8e8e8e;
}

.details-title h3 {
    flex: 1;
    padding-left: 14px;
    font-size: 28px;
    color: #6e6e6e;
}

.details-button {
    width: 43px;
    height: 40px;
    border: 2px solid #b8b8b8;
    border-radius: 4px;
    background-color: #cdcdcd;
}

.props {
    width: 100%;
    border-collapse: collapse;
    border-bottom: 2px solid #bbb;
}

.props th,
.props td {
    height: 61px;
    text-align: left;
    font-weight: normal;
}

.props th {
    width: 199px;
    padding: 0 0 8px 12px;
    border-right: 2px solid #bbb;
    background-color: #cacaca;
    color: #6e6e6e;
}

.props td {
    padding: 4px 0 0 17px;
    color: #c36464;
}

.tips {
    flex: none;
    height: 298px;
    border-top: 2px solid #bbb;
    background-color: #d0d0d0;
}

.tips-buttons {
    display: flex;
    justify-content: flex-end;
    gap: 8px;
    padding: 10px 12px 0 0;
}

.tips-button {
    width: 38px;
    height: 38px;
    border: 2px solid #bbb;
    color: #8e8e8e;
}

.tip {
    padding: 40px 14px 0 0;
    text-align: center;
    font-size: 32px;
    line-height: 60px;
    color: #a5a5a5;
}

.tip kbd {
    display: inline-block;
    padding: 0 9px;
    line-height: 54px;
    border: 2px solid #b8b8b8;
    border-radius: 6px;
    background-color: #cccccc;
    font-family: "DejaVu Sans Mono", monospace;
    font-size: 32px;
}
```
